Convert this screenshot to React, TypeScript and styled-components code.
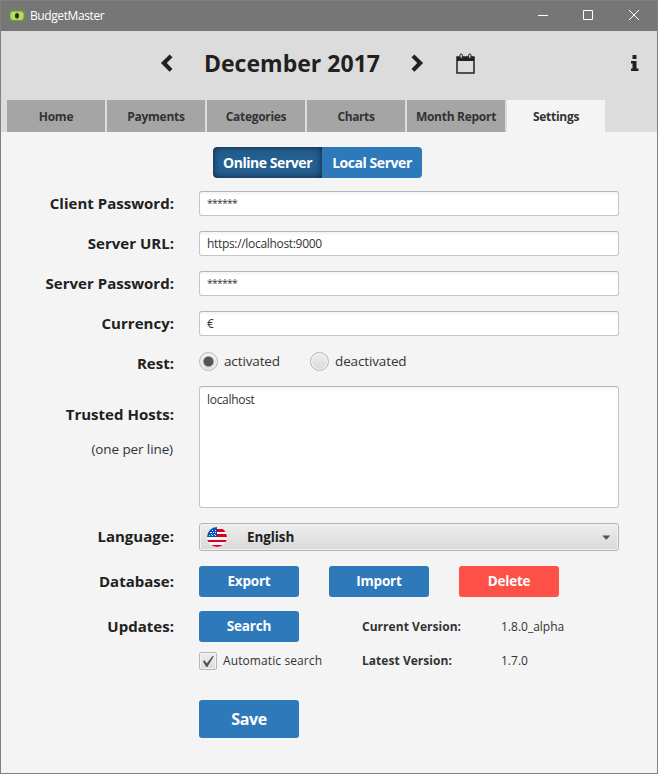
import React from "react";
import styled, { createGlobalStyle, css } from "styled-components";

const GlobalStyle = createGlobalStyle`
  * { box-sizing: border-box; }
  body { margin: 0; background: #f4f4f4; }
  button, input, textarea { font: inherit; margin: 0; }
`;

const Window = styled.div`
  width: 658px;
  height: 774px;
  border: 1px solid #808080;
  background: #f4f4f4;
  color: #212121;
  font-family: "Open Sans", "Noto Sans", sans-serif;
  display: flex;
  flex-direction: column;
  overflow: hidden;
`;

const TitleBar = styled.header`
  height: 30px;
  flex: none;
  background: #767676;
  color: #fff;
  display: flex;
  align-items: center;
  padding-left: 8px;
`;

const AppName = styled.span`
  flex: 1;
  margin-left: 5px;
  font-size: 12px;
  line-height: 16px;
  letter-spacing: -0.4px;
`;

const WindowControls = styled.div`
  display: flex;
  svg { display: block; }
`;

const Header = styled.div`
  height: 69px;
  flex: none;
  background: #dcdcdc;
  display: grid;
  grid-template-columns: 159px 13px 238px 14px 31px 19px 1fr 7px;
  align-items: start;
  padding: 22px 19px 0 0;
  svg { display: block; }
`;

const Month = styled.h1`
  margin: -6px 0 0;
  text-align: center;
  font-size: 23px;
  line-height: 32px;
  font-weight: 700;
  letter-spacing: 0.02px;
  white-space: nowrap;
`;

const TabBar = styled.nav`
  height: 32px;
  flex: none;
  background: #dcdcdc;
  display: flex;
  gap: 2px;
  padding-left: 6px;
`;

const Tab = styled.button<{ $active?: boolean; $spacing: number }>`
  width: 98px;
  height: 32px;
  padding: 1px 0 0;
  border: 0;
  background: ${(p) => (p.$active ? "#f4f4f4" : "#a5a5a5")};
  color: #333;
  font-size: 12px;
  font-weight: 700;
  white-space: nowrap;
  letter-spacing: ${(p) => p.$spacing}px;
`;

const Form = styled.main`
  flex: 1;
  padding: 15px 38px 0 0;
  display: flex;
  flex-direction: column;
`;

const ToggleGroup = styled.div`
  display: flex;
  margin: 0 0 13px 212px;
  border-radius: 4px;
  overflow: hidden;
  width: 209px;
  height: 31px;
`;

const Toggle = styled.button<{ $pressed?: boolean }>`
  width: ${(p) => (p.$pressed ? 109 : 100)}px;
  padding: 0 0 1px;
  border: 0;
  color: #fff;
  font-size: 14px;
  font-weight: 700;
  letter-spacing: -0.45px;
  white-space: nowrap;
  background: #2e79ba;
  ${(p) =>
    p.$pressed &&
    css`
      background: #245f92;
      border-radius: 4px 0 0 4px;
      box-shadow: inset 0 0 7px rgba(0, 0, 0, 0.65);
    `}
`;

const Row = styled.div<{ $height: number; $gap: number }>`
  display: grid;
  grid-template-columns: 173px 1fr;
  grid-template-rows: 100%;
  column-gap: 25px;
  align-items: center;
  height: ${(p) => p.$height}px;
  margin-bottom: ${(p) => p.$gap}px;
`;

const Label = styled.label`
  display: block;
  padding-bottom: 2px;
  text-align: right;
  font-size: 15px;
  line-height: 20px;
  font-weight: 700;
  white-space: nowrap;
  letter-spacing: 0.02px;
`;

const RestLabel = styled(Label)`
  padding: 3px 0 0;
`;

const HostsLabels = styled.div`
  align-self: start;
  padding-top: 18px;
  text-align: right;
`;

const Hint = styled.div`
  margin: 14px 1px 0 0;
  font-size: 13.5px;
  line-height: 18px;
  letter-spacing: -0.1px;
  color: #333;
`;

const fieldLook = css`
  display: block;
  width: 100%;
  border: 1px solid #c5c5c5;
  border-top-color: #b5b5b5;
  border-radius: 3px;
  background: linear-gradient(#f3f3f3, #fff 4px);
  color: #333;
  font-size: 12px;
  outline: none;
`;

const Field = styled.input<{ $masked?: boolean }>`
  ${fieldLook}
  height: 25px;
  padding: ${(p) => (p.$masked ? "0 7px 2px" : "0 7px")};
  font-size: ${(p) => (p.$masked ? 10.5 : 12)}px;
  letter-spacing: ${(p) => (p.$masked ? -0.78 : -0.32)}px;
`;

const Hosts = styled.textarea`
  ${fieldLook}
  height: 122px;
  padding: 5px 7px;
  line-height: 16px;
  letter-spacing: -0.3px;
  resize: none;
`;

const Options = styled.div`
  display: flex;
`;

const Option = styled.div<{ $width: number }>`
  width: ${(p) => p.$width}px;
  display: flex;
  align-items: center;
  gap: 6px;
  color: #333;
  font-size: 13.5px;
  line-height: 19px;
  letter-spacing: -0.13px;
`;

const Radio = styled.span<{ $on?: boolean }>`
  width: 19px;
  height: 19px;
  border-radius: 50%;
  border: 1px solid #b7b7b7;
  background: ${(p) =>
    p.$on
      ? "radial-gradient(circle, #555 4.5px, rgba(85,85,85,0) 5.5px), linear-gradient(#f0f0f0, #dcdcdc)"
      : "linear-gradient(#eee, #dadada)"};
  box-shadow: inset 0 0 0 1px #f5f5f5;
`;

const Combo = styled.button`
  width: 100%;
  height: 28px;
  display: flex;
  align-items: center;
  padding: 0 7px;
  border: 1px solid #b5b5b5;
  border-radius: 3px;
  background: linear-gradient(#eee, #d9d9d9);
  box-shadow: inset 0 0 0 1px #f2f2f2;
  color: #212121;
  font-size: 13.5px;
  font-weight: 700;
  letter-spacing: -0.1px;
  text-align: left;
  span { flex: 1; margin-left: 20px; }
`;

const Actions = styled.div`
  display: flex;
  gap: 30px;
`;

const Button = styled.button<{ $danger?: boolean; $large?: boolean }>`
  width: 100px;
  height: ${(p) => (p.$large ? 38 : 31)}px;
  padding: ${(p) => (p.$large ? 0 : "0 0 1px")};
  border: 0;
  border-radius: 3px;
  background: ${(p) => (p.$danger ? "#ff5047" : "#2e79ba")};
  color: #fff;
  font-size: ${(p) => (p.$large ? 16 : 13.5)}px;
  font-weight: 700;
  letter-spacing: ${(p) => (p.$large ? -0.4 : -0.2)}px;
`;

const UpdateGrid = styled.div`
  display: grid;
  grid-template-columns: 163px 139px 1fr;
  align-items: center;
  font-size: 12px;
  color: #333;
  white-space: nowrap;
`;

const CheckGrid = styled(UpdateGrid)`
  margin-top: -1px;
`;

const Caption = styled.strong`
  font-weight: 700;
  letter-spacing: 0.04px;
`;

const Version = styled.span`
  letter-spacing: 0;
`;

const CheckLine = styled.div`
  display: flex;
  align-items: center;
  gap: 6px;
  letter-spacing: 0.1px;
`;

const CheckBox = styled.span`
  width: 18px;
  height: 18px;
  margin-top: 1px;
  border: 1px solid #b7b7b7;
  border-radius: 2px;
  background: linear-gradient(#eee, #dadada);
  box-shadow: inset 0 0 0 1px #f3f3f3;
  svg { display: block; }
`;

const Money = () => (
  <svg width="16" height="12" viewBox="0 0 16 12">
    <rect x="0.5" y="0.5" width="15" height="10.5" fill="#6f9a3a" />
    <path d="M3.5 1.5h9l2 2v4.5l-2 2h-9l-2-2V3.5z" fill="#b5dc63" />
    <ellipse cx="8" cy="5.8" rx="2" ry="2.8" fill="#27330f" />
  </svg>
);

const Flag = () => (
  <svg width="20" height="20" viewBox="0 0 20 20">
    <defs>
      <clipPath id="disc"><circle cx="10" cy="10" r="10" /></clipPath>
    </defs>
    <g clipPath="url(#disc)">
      <rect width="20" height="20" fill="#f5f5f5" />
      <path d="M10 2h10v3H10zM10 7h10v3H10zM0 13h20v2H0zM0 18h20v2H0z" fill="#d80027" />
      <path d="M0 0h10v10H0z" fill="#0052b4" />
      <path d="M5 3h1v1H5zM8 3h1v1H8zM3 5h2v1H3zM6 5h1v1H6zM8 5h1v1H8zM4 7h1v1H4zM7 7h1v1H7zM2 8h1v1H2zM5 8h1v1H5zM8 8h1v1H8z" fill="#e8f0f8" />
    </g>
  </svg>
);

const tabs: [string, number][] = [
  ["Home", -0.2],
  ["Payments", -0.28],
  ["Categories", -0.3],
  ["Charts", -0.4],
  ["Month Report", -0.28],
  ["Settings", -0.28],
];

const fields: { name: string; value: string; masked?: boolean }[] = [
  { name: "Client Password:", value: "******", masked: true },
  { name: "Server URL:", value: "https://localhost:9000" },
  { name: "Server Password:", value: "******", masked: true },
  { name: "Currency:", value: "€" },
];

export default function App() {
  return (
    <>
      <GlobalStyle />
      <Window>
        <TitleBar>
          <Money />
          <AppName>BudgetMaster</AppName>
          <WindowControls>
            <svg width="137" height="30" viewBox="0 0 137 30" fill="none" stroke="#fff">
              <path d="M18 14.5h10M63.5 9.5h9v9h-9zM109 9l10 10M119 9l-10 10" />
            </svg>
          </WindowControls>
        </TitleBar>

        <Header>
          <span />
          <svg width="13" height="20" viewBox="0 0 13 20">
            <path d="M9.6 1.4 12.5 4.3 6.8 10.1l5.7 5.8-2.9 2.9L.9 10.1z" fill="#212121" />
          </svg>
          <Month>December 2017</Month>
          <svg width="14" height="20" viewBox="0 0 14 20">
            <path d="M3.4 1.4.5 4.3l5.7 5.8-5.7 5.8 2.9 2.9 8.7-8.7z" fill="#212121" />
          </svg>
          <span />
          <svg width="19" height="21" viewBox="0 0 19 21">
            <path d="M1 4h17v16H1z" fill="none" stroke="#212121" strokeWidth="1.5" />
            <path d="M1 4h17v4H1z" fill="#212121" />
            <path d="M4 2.2q0-1.2 1.2-1.2t1.2 1.2v3H4zM12.6 2.2q0-1.2 1.2-1.2T15 2.2v3h-2.4z" fill="#dcdcdc" stroke="#212121" />
          </svg>
          <span />
          <svg width="8" height="20" viewBox="0 0 8 20">
            <path d="M1.5 2h4v4h-4zM0 8h5.5v7.5h2V18H0v-2.5h1.5v-5H0z" fill="#212121" />
          </svg>
        </Header>

        <TabBar>
          {tabs.map(([name, spacing]) => (
            <Tab key={name} $active={name === "Settings"} $spacing={spacing}>{name}</Tab>
          ))}
        </TabBar>

        <Form>
          <ToggleGroup>
            <Toggle $pressed>Online Server</Toggle>
            <Toggle>Local Server</Toggle>
          </ToggleGroup>

          {fields.map(({ name, value, masked }) => (
            <Row key={name} $height={25} $gap={15}>
              <Label>{name}</Label>
              <Field defaultValue={value} $masked={masked} />
            </Row>
          ))}

          <Row $height={21} $gap={14}>
            <RestLabel>Rest:</RestLabel>
            <Options>
              <Option $width={111}><Radio $on />activated</Option>
              <Option $width={111}><Radio />deactivated</Option>
            </Options>
          </Row>

          <Row $height={122} $gap={15}>
            <HostsLabels>
              <Label>Trusted Hosts:</Label>
              <Hint>(one per line)</Hint>
            </HostsLabels>
            <Hosts defaultValue="localhost" />
          </Row>

          <Row $height={28} $gap={15}>
            <Label>Language:</Label>
            <Combo>
              <Flag />
              <span>English</span>
              <svg width="9" height="5" viewBox="0 0 9 5"><path d="M.3.5h8L4.3 4.7z" fill="#505050" /></svg>
            </Combo>
          </Row>

          <Row $height={31} $gap={14}>
            <Label>Database:</Label>
            <Actions>
              <Button>Export</Button>
              <Button>Import</Button>
              <Button $danger>Delete</Button>
            </Actions>
          </Row>

          <Row $height={31} $gap={10}>
            <Label>Updates:</Label>
            <UpdateGrid>
              <Button>Search</Button>
              <Caption>Current Version:</Caption>
              <Version>1.8.0_alpha</Version>
            </UpdateGrid>
          </Row>

          <Row $height={18} $gap={30}>
            <span />
            <CheckGrid>
              <CheckLine>
                <CheckBox>
                  <svg width="16" height="16" viewBox="0 0 16 16">
                    <path d="M3 8.5 4.5 7.3 6.8 10.6 12.8 2.8 13.7 3.2 7.3 14h-.9z" fill="#4d4d4d" />
                  </svg>
                </CheckBox>
                Automatic search
              </CheckLine>
              <Caption>Latest Version:</Caption>
              <Version>1.7.0</Version>
            </CheckGrid>
          </Row>

          <Row $height={38} $gap={0}>
            <span />
            <Button $large>Save</Button>
          </Row>
        </Form>
      </Window>
    </>
  );
}
